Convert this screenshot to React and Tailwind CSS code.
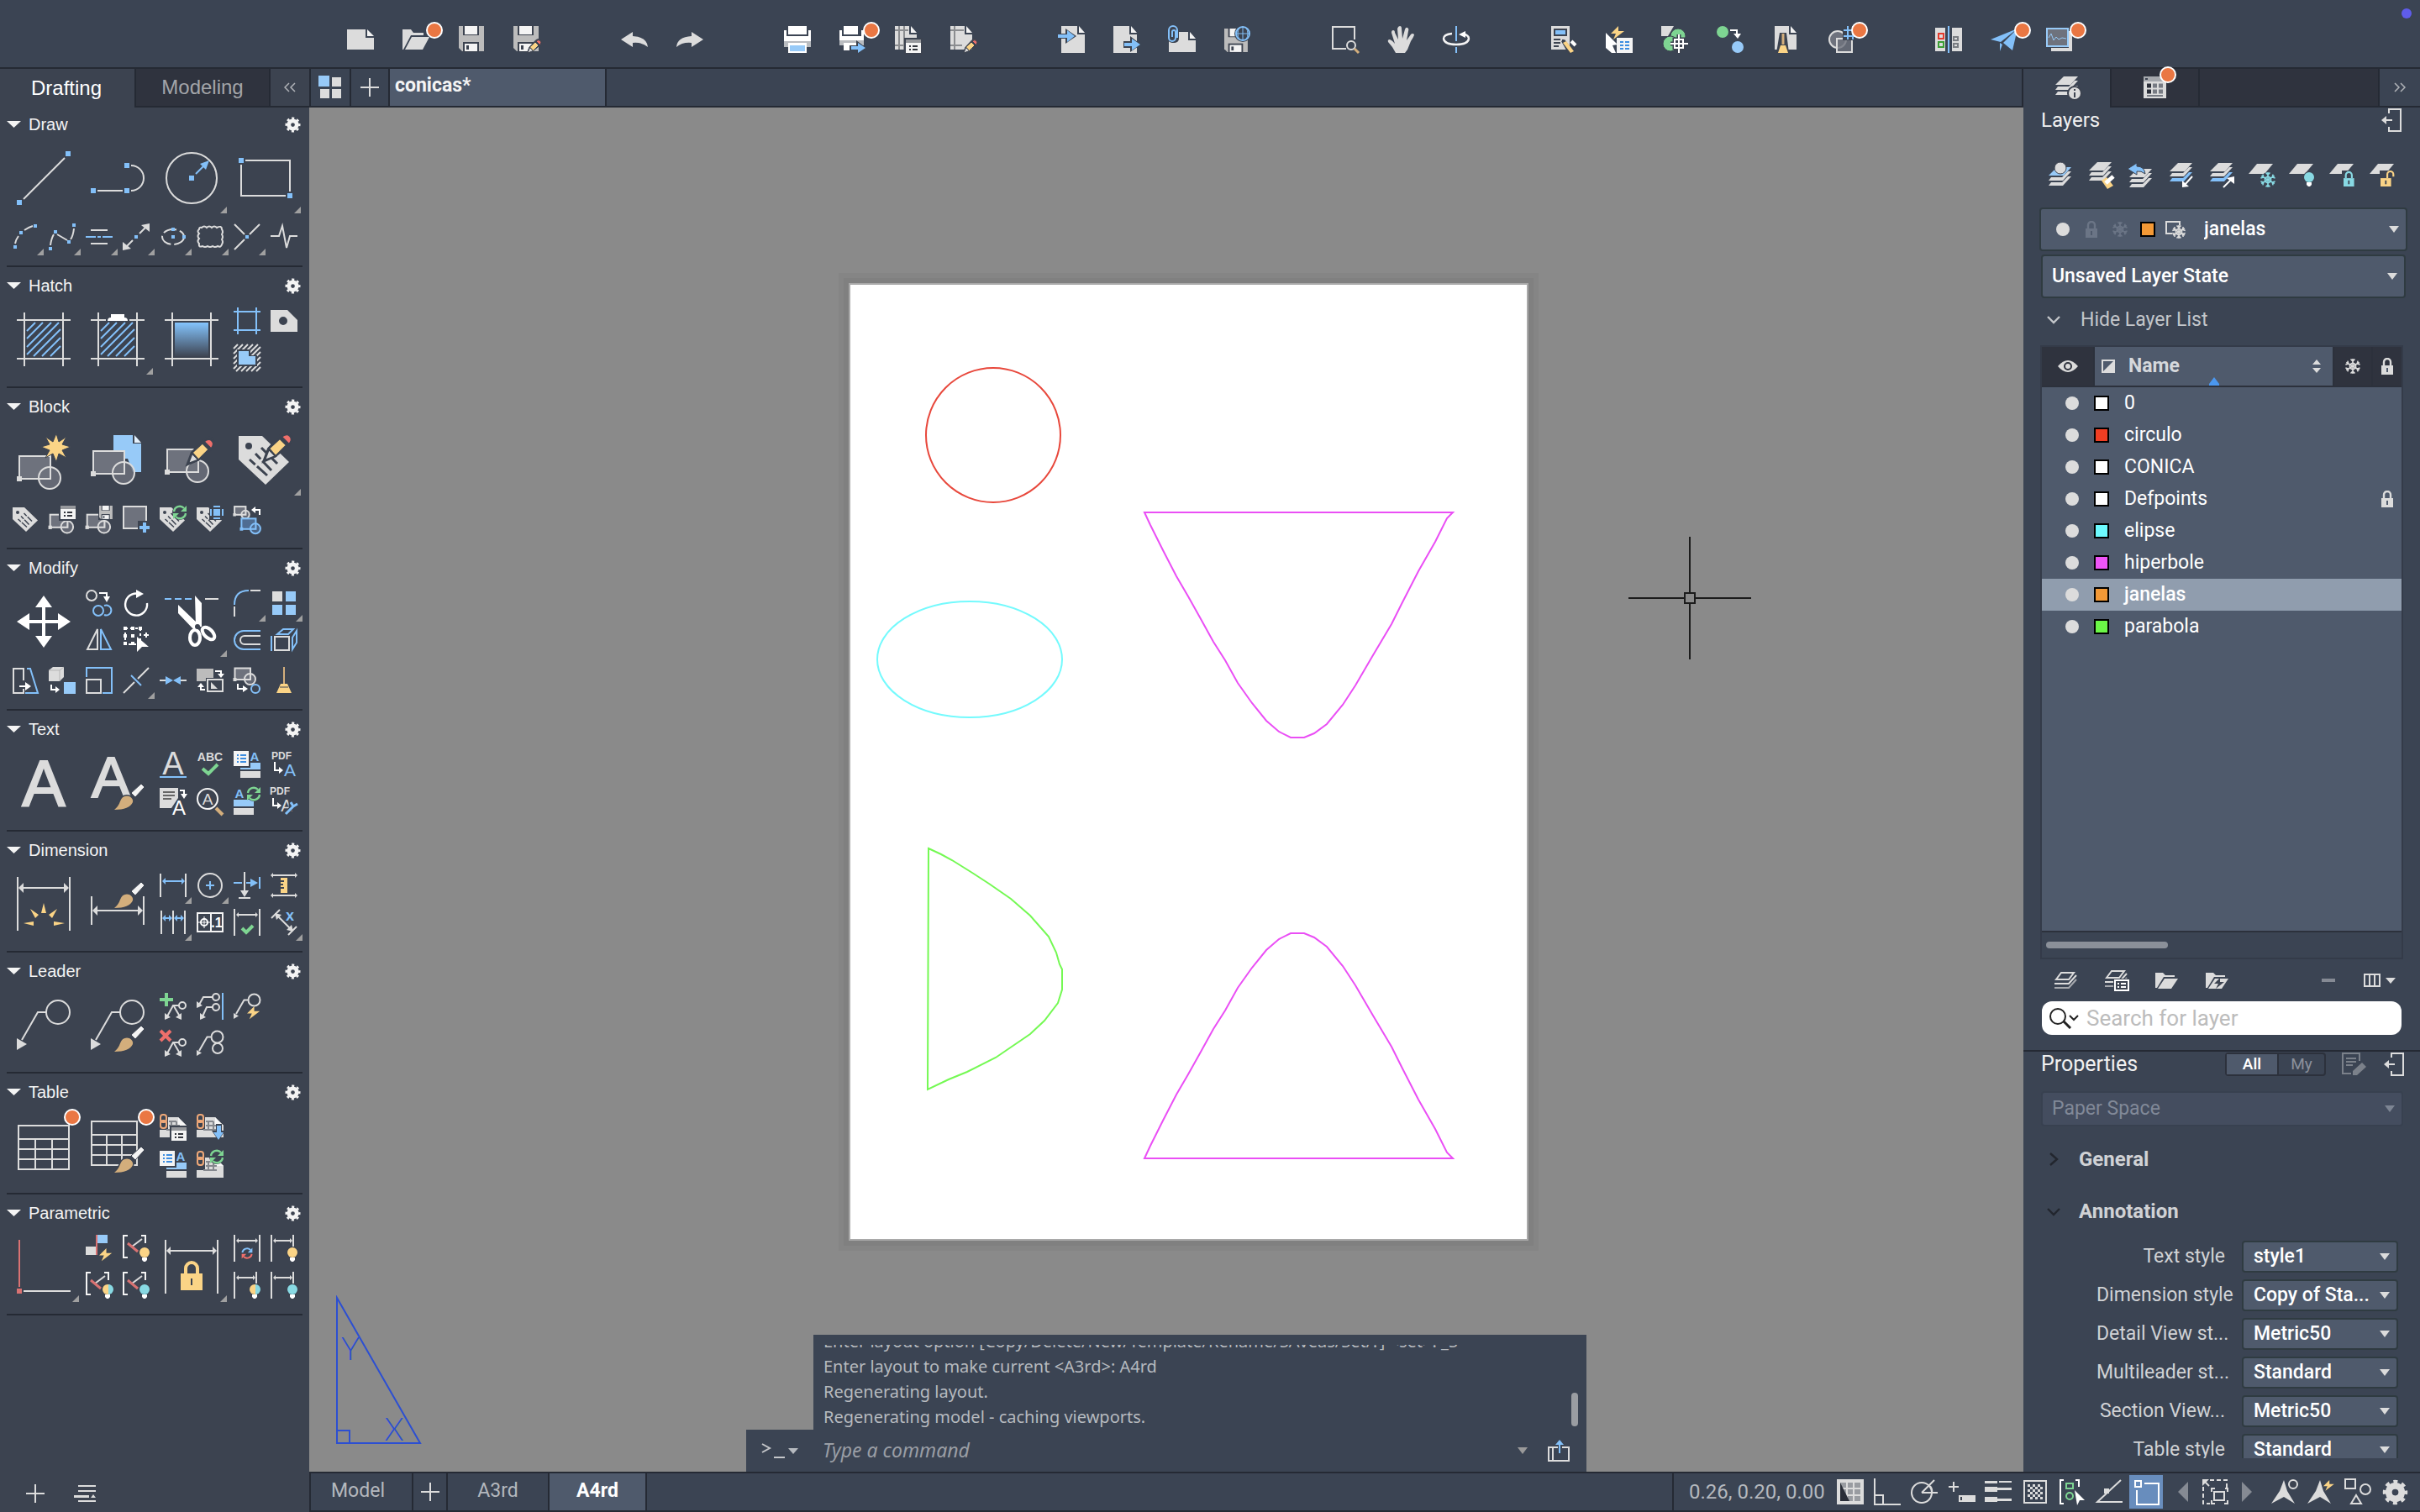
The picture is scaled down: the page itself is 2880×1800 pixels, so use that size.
import React from 'react'

const W = '#dcdcdc'
const B = '#83c0f9'
const LB = '#97caf8'
const Y = '#fbd486'
const R = '#ef6f6b'
const G = '#7ed592'
const TAN = '#d3ae7c'
const BG = '#3c4350'
const BLK = '#6e727d'
const TEAL = '#88d9e3'
const BLACK = '#2a2e38'

/* ================= ICON PARTS ================= */

const Dot = ({ x, y, s = 6, c = B }) => <rect x={x - s / 2} y={y - s / 2} width={s} height={s} fill={c} />

const L = ({ d, c = W, w = 2, ...rest }) => <path d={d} fill="none" stroke={c} strokeWidth={w} {...rest} />

const P = ({ d, c = W, ...rest }) => <path d={d} fill={c} {...rest} />

const T = ({ x, y, s, c = W, b, heavy, children }) => (
  <text x={x} y={y} fontSize={s} fill={c} stroke={heavy ? c : 'none'} strokeWidth={2} fontWeight={b ? 700 : 400} textAnchor="middle" fontFamily="Liberation Sans, Arial, sans-serif">
    {children}
  </text>
)

const Pencil = ({ x, y, k = 1 }) => (
  <g transform={`translate(${x} ${y}) scale(${k})`} stroke={BG} strokeWidth="2">
    <path d="M-2 2L4 -14L20 -31Q28 -36 32 -30Q35 -24 29 -18L12 -4Z" fill={BG} />
    <path d="M0 0L5 -13L13 -5Z" fill={W} />
    <path d="M5 -14L18 -26L26 -18L13 -5Z" fill={Y} />
    <path d="M20 -28Q26 -33 30 -29Q34 -25 29 -19Z" fill={R} />
  </g>
)

const Brush = ({ y = 0 }) => (
  <g transform={`translate(0 ${y})`}>
    <path d="M28 64Q33 60 35 54Q38 46 46 48Q51 51 50 55Q46 64 28 64Z" fill={TAN} stroke={BG} strokeWidth="3" />
    <path d="M28 64Q33 60 35 54Q38 46 46 48Q51 51 50 55Q46 64 28 64Z" fill={TAN} />
    <path d="M60 33L64 37L53 49L48 44Z" fill="#f4f4f4" stroke={BG} />
  </g>
)

const Block = ({ x = 0, y = 0, k = 1, c = W, f = BLK, w = 2 }) => (
  <g transform={`translate(${x} ${y}) scale(${k})`} stroke={c} strokeWidth={w / k}>
    <rect x="3" y="3" width="37" height="27" fill={f} />
    <circle cx="39" cy="29" r="13" fill={f} fillOpacity=".8" />
    <path d="M27 30H40V16" fill="none" />
    <rect x="1" y="28" width="4" height="4" fill={c} />
  </g>
)

const Tag = ({ k = 1, x = 0, y = 0 }) => (
  <g transform={`translate(${x} ${y}) scale(${k})`}>
    <path d="M0 0H28L60 31L32 58L0 28Z" fill={W} />
    <circle cx="12" cy="12" r="4" fill={BG} />
    <path d="M27 14L46 33M20 21L39 41M13 28L34 47" stroke={BG} strokeWidth="3" strokeDasharray="9 3 22" />
  </g>
)

const Disk = ({ x = 0, y = 0, k = 1 }) => (
  <g transform={`translate(${x} ${y}) scale(${k})`}>
    <path d="M0 0H30V30H4L0 26Z" fill="#bcbcbc" />
    <rect x="5" y="-1" width="19" height="12" fill={BG} />
    <rect x="7" y="0" width="15" height="10" fill="#f4f4f4" />
    <rect x="5" y="19" width="19" height="12" fill={BG} />
    <rect x="7" y="21" width="15" height="9" fill="#f4f4f4" />
    <rect x="9" y="23" width="3" height="5" fill={BG} />
  </g>
)

const Refresh = ({ x, y, k = 1, c = G, c2 = G }) => (
  <g transform={`translate(${x} ${y}) scale(${k})`} fill="none" strokeWidth="2.4">
    <path d="M-7 -1A7 7 0 0 1 5 -5" stroke={c} />
    <path d="M8 -8V-1H1Z" fill={c} />
    <path d="M7 1A7 7 0 0 1 -5 5" stroke={c2} />
    <path d="M-8 8V1H-1Z" fill={c2} />
  </g>
)

const Bulb = ({ x, y, c = Y, c2 }) => (
  <g>
    <circle cx={x} cy={y} r="7" fill={BG} />
    <circle cx={x} cy={y} r="6" fill={c} />
    {c2 && <path d={`M${x + 1} ${y - 6}A6 6 0 0 1 ${x + 1} ${y + 6}Z`} fill={c2} />}
    <path d={`M${x - 3} ${y + 6}H${x + 3}V${y + 9}L${x + 1} ${y + 11}H${x - 1}L${x - 3} ${y + 9}Z`} fill="#fff" />
  </g>
)

const Flake = ({ x, y, r = 9, c = W }) => (
  <g stroke={c} strokeWidth="1.6" fill="none">
    {[0, 60, 120, 180, 240, 300].map((a) => (
      <path key={a} d={`M0 0V${-r}M-2.5 ${-r + 0.5}L0 ${-r + 3}L2.5 ${-r + 0.5}M0 -4L3.5 -2`} transform={`translate(${x} ${y}) rotate(${a})`} />
    ))}
  </g>
)

const Lock = ({ x, y, k = 1, c = W, open, hole = BG }) => (
  <g transform={`translate(${x} ${y}) scale(${k})`}>
    <path d={open ? 'M9 9V4A4 4 0 0 1 17 4V7' : 'M3 9V5A4 4 0 0 1 11 5V9'} fill="none" stroke={c} strokeWidth="2.4" />
    <rect x="0" y="9" width="14" height="11" fill={c} />
    <rect x="6" y="12" width="2" height="5" fill={hole} />
  </g>
)

const Stack = ({ y = 0, top = W, mid = W, low = W }) => (
  <g transform={`translate(0 ${y})`}>
    <path d="M12 1H29L20 11H2Z" fill={top} />
    <path d="M5 13L2 17H19L29 6H25L18 13Z" fill={mid} />
    <path d="M5 19L2 23H19L29 12H25L18 19Z" fill={low} />
  </g>
)

const Outline = ({ y = 0 }) => (
  <g transform={`translate(0 ${y})`} fill="none" stroke={W} strokeWidth="2">
    <path d="M11 5H26L20 13H5Z" />
    <path d="M3 18H20L29 8" />
    <path d="M3 23H20L29 13" stroke="#a5a8ad" />
  </g>
)

// dimension line with arrow heads on both ends
const Dim = ({ x1, x2, y, c = W, s = 4 }) => (
  <g fill={c}>
    <path d={`M${x1 + 2} ${y}H${x2 - 2}`} stroke={c} strokeWidth="2" />
    <path d={`M${x1} ${y}l${s} ${-s}v${s * 2}z`} />
    <path d={`M${x2} ${y}l${-s} ${-s}v${s * 2}z`} />
  </g>
)

const Leader = ({ x = 0, y = 0, k = 1, w = 2 }) => (
  <g transform={`translate(${x} ${y}) scale(${k})`} fill="none" stroke={W} strokeWidth={w / k}>
    <circle cx="49" cy="17" r="14" />
    <path d="M35 17H25L6 50" />
    <path d="M0 48V62L12 55Z" fill={W} strokeWidth="0" />
  </g>
)

const Sheet = ({ x = 0, y = 0, w = 24, h = 24 }) => (
  <g transform={`translate(${x} ${y})`}>
    <path d={`M0 0H${w - 9}V10H${w}V${h}H0Z`} fill={W} />
    <path d={`M${w - 7} 0L${w} 8H${w - 7}Z`} fill="#f4f4f4" />
  </g>
)

const Bolt = ({ x, y, k = 1 }) => <path d="M9 0L0 9H6L3 16L16 6H9Z" fill={Y} transform={`translate(${x} ${y}) scale(${k})`} />

const Frame = () => <L d="M9 0V64M55 0V64M0 9H64M0 55H64" />

const Brackets = () => (
  <g>
    <L d="M6 1H1V27H6M22 1H27V10" c="#f4f4f4" />
    <L d="M11 14L23 5" c={W} />
    <L d="M6 10L18 20" c="#d97272" w={3} />
  </g>
)

const Chain = () => <g fill="none" stroke="#efa878" strokeWidth="2"><rect x="1" y="1" width="7" height="9" rx="3" /><rect x="1" y="8" width="7" height="9" rx="3" /></g>

const Ledger = () => (
  <g>
    <path d="M10 4H22L32 14V28H0V19H10Z" fill={W} />
    <path d="M22 4L32 14H22Z" fill="#f6f6f6" />
    <path d="M11 9H20M11 14H24M8 19H24M14 9V20M20 9V20" stroke="#85888e" strokeWidth="2" />
  </g>
)

const TagText = ({ y = 0 }) => (
  <g transform={`translate(0 ${y})`}>
    <T x={25} y={12} s={15} c={B} b>A</T>
    <rect x="8" y="14" width="24" height="8" fill={LB} />
    <rect x="8" y="24" width="24" height="8" fill={W} />
    <rect x="-1" y="-1" width="21" height="21" fill={BG} />
    <rect width="18" height="18" fill="#f4f4f4" />
    <path d="M4 5H6M8 5H15M4 9H6M8 9H15M4 13H6M8 13H15" stroke="#3d8de0" strokeWidth="2" />
  </g>
)

const Card = ({ x, y }) => (
  <g transform={`translate(${x} ${y})`}>
    <rect x="-2" y="-2" width="22" height="20" fill={BG} />
    <rect width="18" height="16" fill="#f4f4f4" />
    <rect width="18" height="4" fill="#96989c" />
    <path d="M4 8H6M8 8H14M4 12H6M8 12H14" stroke="#33363d" strokeWidth="2" />
  </g>
)

/* ================= ICONS ================= */

const icons = {
  /* draw */
  line: <><L d="M8 57L57 8" /><Dot x={3} y={61} /><Dot x={61} y={3} /></>,
  polyline: <><L d="M8 47H38M48 17A15 15 0 0 1 48 47" /><Dot x={3} y={47} /><Dot x={43} y={47} /><Dot x={43} y={17} /></>,
  circle: <><circle cx="32" cy="32" r="30" fill="none" stroke={W} strokeWidth="2" /><Dot x={32} y={32} /><L d="M37 27L46 18" c={B} /><P d="M42 15L53 11L49 22Z" c={B} /></>,
  rect: <><L d="M8 11H61V48M3 16V53H56" /><Dot x={3} y={11} /><Dot x={61} y={53} /></>,
  arc: <><L d="M4 24Q5 19 8 15M15 8Q19 5 25 3" /><Dot x={4} y={28} s={4} /><Dot x={11} y={11} s={4} /><Dot x={28} y={3} s={4} /></>,
  spline: <><L d="M2 26Q3 18 6 13M10 13L22 20M30 6Q29 15 26 19" /><Dot x={2} y={30} s={4} /><Dot x={8} y={10} s={4} /><Dot x={24} y={22} s={4} /><Dot x={30} y={2} s={4} /></>,
  mline: <><L d="M6 8H26M6 24H26" /><L d="M0 16H12M14 16H18M20 16H32" c={B} /></>,
  xline: <><L d="M5 27L12 20M20 12L27 5" /><P d="M0 32V22L10 30ZM32 0V10L22 2Z" /><Dot x={16} y={16} s={4} /></>,
  ellipse: <><ellipse cx="16" cy="16" rx="13" ry="9" fill="none" stroke={W} strokeWidth="2" strokeDasharray="16 4" /><Dot x={16} y={7} s={4} /><Dot x={16} y={16} s={4} /><Dot x={29} y={16} s={4} /></>,
  cloud: <L d="M3 7Q3 4 6 5Q9 2 12 5Q15 2 18 5Q21 2 24 5Q30 2 30 7Q32 10 30 13Q32 16 30 19Q32 22 30 25Q29 29 25 27Q22 29 19 27Q16 29 13 27Q10 29 7 27Q2 29 3 24Q0 21 3 18Q0 15 3 12Q0 9 3 7Z" />,
  cpoint: <><L d="M1 1L13 13M1 31L13 19M19 13L31 1" /><Dot x={16} y={16} s={4} /></>,
  breakline: <L d="M0 15H10L14 3L19 29L23 15H32" />,
  /* hatch */
  hatch: <><Frame /><L d="M12 22L22 12M12 31L31 12M12 41L41 12M12 50L50 12M20 52L52 20M30 52L52 30M40 52L52 40" c={B} /></>,
  hatchEdit: <><Frame /><rect x="18" y="5" width="28" height="7" fill={BG} /><L d="M12 22L22 12M12 31L31 12M12 41L41 12M12 50L50 12M20 52L52 20M30 52L52 30M40 52L52 40" c={B} /><P d="M24 2H40V6Q44 6 44 10H20Q20 6 24 6Z" c="#fff" /></>,
  gradient: <><defs><linearGradient id="fade" x1="0" y1="0" x2="0" y2="1"><stop offset="0" stopColor="#84c4fd" /><stop offset="1" stopColor="#3f4654" /></linearGradient></defs><Frame /><rect x="12" y="12" width="40" height="40" fill="url(#fade)" /></>,
  boundary: <L d="M5 0V32M27 0V32M0 5H32M0 27H32" c={B} />,
  region: <P d="M0 3H20L32 15V29H0ZM15 11A5 5 0 1 0 15 21A5 5 0 1 0 15 11Z" fillRule="evenodd" />,
  wipeout: <><L d="M0 5L5 0M0 11L11 0M0 17L17 0M0 23L23 0M0 29L29 0M3 32L32 3M9 32L32 9M15 32L32 15M21 32L32 21M27 32L32 27" /><P d="M4 6H20V13H28V26H4Z" c={BG} /><P d="M6 8H18V14H26V24H6Z" c={LB} /></>,
  /* block */
  blockNew: <><Block y={24} /><P d="M47 0L50 10L59 4L54 13L64 16L54 20L59 29L50 24L47 34L43 24L34 29L39 20L29 16L39 13L34 4L43 10Z" c={Y} stroke={BG} strokeWidth="1" /></>,
  blockInsert: <><P d="M27 2H50V12H60V46H50L44 30H27Z" c={LB} /><P d="M52 2L60 11H52Z" c="#e4f1fd" /><Block y={18} /></>,
  blockEdit: <><Block y={16} /><Pencil x={28} y={36} k={0.94} /></>,
  attrEdit: <><Tag y={3} /><Pencil x={31} y={32} /></>,
  tag: <Tag k={0.5} x={1} y={2} />,
  blockAttr: <><Block k={0.56} y={9} /><Card x={14} y={0} /></>,
  blockSave: <><Block k={0.56} y={9} /><rect x="15" y="-1" width="18" height="18" fill={BG} /><Disk k={0.53} x={16} y={0} /></>,
  blockBase: <><rect x="1" y="1" width="27" height="26" fill={BLK} stroke={W} strokeWidth="2" /><path d="M18 18H32V32H18Z" fill={BG} /><L d="M26 20V32M20 26H32" c={B} w={4} /></>,
  tagSync: <><Tag k={0.5} x={0} y={2} /><circle cx="24" cy="8" r="9" fill={BG} /><Refresh x={24} y={8} /></>,
  tagSelect: <><Tag k={0.5} x={0} y={2} /><rect x="15" y="-1" width="18" height="18" fill={BG} /><rect x="20" y="4" width="8" height="8" fill={B} /><L d="M20 1H28M20 15H28M17 4V12M31 4V12" c={B} /></>,
  blockSwap: <><Block k={0.36} x={0} y={0} /><Block k={0.46} x={8} y={14} c={B} f="#4f6d92" /><L d="M24 5H31V11" c="#fff" /><P d="M21 5L26 1V9Z" c="#fff" /></>,
  /* modify */
  move: <><L d="M32 12V52M12 32H52" c="#fff" w={4} /><P d="M32 1L42 15H22ZM32 63L42 49H22ZM0 32L15 22V42ZM64 32L49 22V42Z" c="#fff" /></>,
  copy: <><circle cx="7" cy="7" r="6" fill="none" stroke={W} strokeWidth="2" /><circle cx="15" cy="25" r="6" fill="none" stroke={B} strokeWidth="2" /><L d="M22 19A6 6 0 1 1 22 30" c={B} /><L d="M16 4H25V10" c="#fff" /><P d="M21 8H29L25 15Z" c="#fff" /></>,
  rotate: <><L d="M22 6A13 13 0 1 0 29 16" c="#fff" w={2.4} /><P d="M16 0L25 5L16 10Z" c="#fff" /></>,
  trim: <><L d="M0 5H8M12 5H20M24 5H32" c={B} /><L d="M48 5H64" /><P d="M36 1L44 10V38H37ZM16 12L41 36L36 43L16 22Z" c="#fff" /><ellipse cx="36" cy="51" rx="6" ry="9" fill="none" stroke="#fff" strokeWidth="4" /><ellipse cx="52" cy="46" rx="5" ry="9" fill="none" stroke="#fff" strokeWidth="4" transform="rotate(-45 52 46)" /><circle cx="39" cy="38" r="3" fill={BG} /></>,
  fillet: <><L d="M1 18Q1 1 18 1" c={B} /><L d="M20 1H32M1 20V32" /></>,
  array: <><rect x="2" y="2" width="12" height="12" fill={W} /><rect x="18" y="2" width="12" height="12" fill={LB} /><rect x="2" y="18" width="12" height="12" fill={LB} /><rect x="18" y="18" width="12" height="12" fill={LB} /></>,
  mirror: <><L d="M14 3V27H2Z" /><L d="M18 3V27H30Z" c={B} /></>,
  stretch: <><L d="M3 2H21V21H3Z" c="#fff" strokeDasharray="3 3" /><Dot x={3} y={2} s={4} c="#fff" /><Dot x={12} y={2} s={4} c="#fff" /><Dot x={21} y={2} s={4} c="#fff" /><Dot x={3} y={11} s={4} c="#fff" /><Dot x={12} y={11} s={4} c="#fff" /><Dot x={3} y={20} s={4} c="#fff" /><Dot x={12} y={20} s={4} c="#fff" /><P d="M17 12L31 24H23L17 30Z" c="#fff" /><L d="M28 7V13M25 10H31" c="#fff" /></>,
  offset: <><L d="M32 5H12A10 10 0 0 0 12 27H32" c={B} /><L d="M32 11H13A5 5 0 0 0 13 21H32" /></>,
  extrude: <><L d="M5 12H22V28H5Z" /><L d="M1 11V29M8 9L15 3H27L21 9ZM26 13L31 5V19L26 27Z" c={B} /></>,
  taper: <><L d="M14 16V2H2V31H14V26" /><L d="M18 2H22L31 31H16" c={B} /><L d="M9 23H18" c="#fff" /><P d="M16 18L23 23L16 28Z" c="#fff" /></>,
  extract: <><P d="M0 4L5 0H18V12L13 17H0Z" /><L d="M0 4H13V17M13 4L18 0" c="#b5b5b5" w={1} /><rect x="18" y="18" width="14" height="14" fill={LB} /><L d="M3 21V27H9" c="#fff" /><P d="M8 23L13 27L8 31Z" c="#fff" /></>,
  scale: <><L d="M1 15H18V31H1Z" /><L d="M1 12V1H31V31H20" c={B} /></>,
  breakAt: <><L d="M1 31L14 18M18 14L31 1" /><L d="M10 10L22 22" c={B} /></>,
  join: <><L d="M0 16H8M24 16H32" /><P d="M7 11L16 16L7 21ZM25 11L16 16L25 21Z" c={B} /></>,
  order: <><rect x="0" y="2" width="20" height="15" fill="#bcbcbc" /><rect x="11" y="13" width="22" height="18" fill={BG} /><rect x="13" y="15" width="18" height="14" fill="none" stroke={W} strokeWidth="2" /><P d="M17 18V26H25Z" /><L d="M22 5H29V9M10 27H5V23" c="#fff" /><P d="M25 8H33L29 13ZM1 24H9L5 19Z" c="#fff" /></>,
  group: <><Block k={0.5} x={0} y={0} /><circle cx="26" cy="26" r="5" fill="none" stroke={B} strokeWidth="2" /><L d="M5 20V26H12" c="#fff" /><P d="M11 22L17 26L11 30Z" c="#fff" /></>,
  purge: <><L d="M16 0V20" c={TAN} /><P d="M12 20H20L25 31H7Z" c={Y} /><L d="M11 24H21" c={BG} w={1} /></>,
  /* text */
  mtext: <T x={32} y={60} s={77} heavy>A</T>,
  textStyle: <><T x={24} y={49} s={69} heavy>A</T><Brush /></>,
  stext: <><T x={16} y={28} s={38}>A</T><L d="M0 31H32" c={B} /></>,
  spell: <><T x={16} y={12} s={14} b>ABC</T><L d="M7 21L14 27L25 16" c={G} w={4} /></>,
  field: <TagText />,
  pdfText: <><T x={13} y={10} s={12} b>PDF</T><L d="M5 13V23H10" c="#fff" /><P d="M10 19L15 23L10 27Z" c="#fff" /><T x={23} y={30} s={21} c={B}>A</T></>,
  textConv: <><P d="M0 0H22V12L14 24H0Z" /><L d="M4 5H18M4 9H18M4 13H14" c="#666" /><L d="M24 3H29V8" c="#fff" /><P d="M25 7H33L29 13Z" c="#fff" /><T x={23} y={32} s={24} c="#fff">A</T></>,
  find: <><circle cx="13" cy="13" r="12" fill="none" stroke="#f4f4f4" strokeWidth="2" /><T x={13} y={20} s={19}>A</T><L d="M23 24L31 32" c={TAN} w={4} /></>,
  fieldSync: <><T x={7} y={12} s={15} c={B} b>A</T><rect x="0" y="14" width="24" height="8" fill={LB} /><rect x="0" y="24" width="24" height="8" fill={W} /><circle cx="24" cy="7" r="9" fill={BG} /><Refresh x={24} y={7} /></>,
  pdfTool: <><T x={11} y={8} s={12} b>PDF</T><L d="M3 12V21H8" c="#fff" /><P d="M8 17L13 21L8 25Z" c="#fff" /><T x={19} y={28} s={20}>A</T><L d="M18 31L27 22M24 16V23H31" c={BG} w={5} /><L d="M18 31L27 22M24 17L27 22L32 19" c={B} w={3} /></>,
  /* dimension */
  dim: <><L d="M1 0V64M63 0V64" /><Dim x1={2} x2={62} y={13} s={6} /><P d="M32 31L35 43H29ZM16 38L26 45L22 49ZM48 38L38 45L42 49ZM8 55L20 53V58ZM57 55L44 53V58Z" c={Y} /></>,
  dimStyle: <><L d="M1 23V57M63 23V57" /><Dim x1={2} x2={62} y={40} s={6} /><Brush y={-27} /></>,
  dimLinear: <><L d="M1 2V30M31 2V30" /><Dim x1={3} x2={30} y={11} c={B} /></>,
  centerMark: <><circle cx="16" cy="16" r="14" fill="none" stroke={W} strokeWidth="2" /><L d="M16 11V21M11 16H21" c={B} /></>,
  dimSpace: <><L d="M0 13H10M15 13H24" c={B} /><P d="M20 8L29 13L20 18Z" c={B} /><L d="M31 6V20" c={B} /><L d="M13 0V24M6 31H20" /><P d="M8 22H18L13 30Z" /></>,
  measure: <><Dim x1={0} x2={32} y={4} s={3} /><Dim x1={0} x2={32} y={28} s={3} /><rect x="12" y="7" width="8" height="18" fill={Y} /><L d="M12 11H16M12 15H15M12 19H16" c={BG} /></>,
  dimCont: <><L d="M2 2V30M16 2V30M30 2V30" /><Dim x1={3} x2={15} y={11} c={B} /><Dim x1={17} x2={29} y={11} c={B} /></>,
  tolerance: <><L d="M1 5H31V27H1ZM17 5V27" c="#f4f4f4" /><circle cx="9" cy="16" r="4" fill="none" stroke="#fff" strokeWidth="2" /><L d="M9 9V23M2 16H16" c="#fff" w={1} /><T x={24} y={22} s={16} c="#fff" b>.1</T></>,
  inspect: <><L d="M1 0V32M31 0V32" /><Dim x1={3} x2={29} y={7} s={3} /><L d="M10 23L15 28L23 20" c={G} w={4} /></>,
  oblique: <><L d="M1 11L11 1M21 31L31 21M8 8L24 24" /><P d="M5 5L13 7L7 13ZM27 27L19 25L25 19Z" /><T x={23} y={14} s={18} c={B} b>x</T></>,
  /* leader */
  leader: <Leader />,
  leaderStyle: <><Leader /><Brush /></>,
  leaderAdd: <><L d="M8 0V16M0 8H16" c={G} w={4} /><circle cx="27" cy="15" r="4" fill="none" stroke={W} strokeWidth="2" /><L d="M23 15H16L9 28M17 16L24 28" /><P d="M6 32V24L13 29ZM26 32V24L19 29Z" /></>,
  leaderAlign: <><circle cx="23" cy="5" r="4" fill="none" stroke={W} strokeWidth="2" /><circle cx="23" cy="17" r="4" fill="none" stroke={W} strokeWidth="2" /><L d="M19 5H8L3 14M19 17H12L7 28" /><P d="M0 18V10L7 15ZM4 32V24L11 29Z" /><L d="M31 0V32" c={B} /></>,
  leaderBolt: <><Leader k={0.5} /><P d="M16 17H32V32H16Z" c={BG} /><Bolt x={16} y={16} k={0.95} /></>,
  leaderDel: <><L d="M1 1L13 13M13 1L1 13" c={R} w={4} /><circle cx="27" cy="15" r="4" fill="none" stroke={W} strokeWidth="2" /><L d="M23 15H16L9 28M17 16L24 28" /><P d="M6 32V24L13 29ZM26 32V24L19 29Z" /></>,
  leaderCollect: <><Leader k={0.5} /><circle cx="25" cy="22" r="6" fill={BG} stroke={W} strokeWidth="2" /></>,
  /* table */
  table: <L d="M2 8H62V60H2ZM2 24H62M2 36H62M2 48H62M22 24V60M42 24V60" />,
  tableStyle: <><L d="M1 3H55V55H1ZM1 19H55M1 31H55M1 43H55M19 19V55M37 19V55" /><Brush /></>,
  link: <><Ledger /><Chain /><Card x={14} y={16} /></>,
  linkDown: <><Ledger /><Chain /><P d="M23 12H30V20H34L26 32L18 20H23Z" c={BG} /><P d="M24 14H29V22H32L26 31L20 22H24Z" c={B} /></>,
  linkField: <TagText />,
  linkSync: <><g transform="translate(0 4)"><Ledger /></g><Chain /><circle cx="24" cy="7" r="9" fill={BG} /><Refresh x={24} y={7} /></>,
  /* parametric */
  geo: <><L d="M3 0V56" c="#d97272" /><Dot x={3} y={61} c="#d97272" /><L d="M8 61H64" /></>,
  autoCon: <><rect x="14" y="0" width="12" height="10" fill={LB} /><rect x="0" y="14" width="12" height="10" fill={W} /><L d="M13 0V24" c="#d97272" /><Bolt x={16} y={16} k={0.95} /></>,
  conShow: <><Brackets /><Bulb x={26} y={21} /></>,
  conMix: <><Brackets /><Bulb x={26} y={21} c={Y} c2={TEAL} /></>,
  conHide: <><Brackets /><Bulb x={26} y={21} c={TEAL} /></>,
  dimLock: <><L d="M1 0V64M63 0V64" /><Dim x1={2} x2={62} y={13} s={5} /><path d="M25 42V34A7 7 0 0 1 39 34V42" fill="none" stroke={Y} strokeWidth="4" /><rect x="19" y="40" width="26" height="20" fill={Y} /><rect x="31" y="46" width="2" height="8" fill={BG} /></>,
  dimConv: <><L d="M1 0V32M31 0V32" /><Dim x1={3} x2={29} y={7} s={3} /><Refresh x={16} y={22} k={0.8} c={B} c2={R} /></>,
  dimShow: <><L d="M1 0V32M27 0V14" /><Dim x1={3} x2={26} y={7} s={3} /><Bulb x={26} y={21} /></>,
  dimMix: <><L d="M1 0V32M27 0V14" /><Dim x1={3} x2={26} y={7} s={3} /><Bulb x={25} y={21} c={Y} c2={TEAL} /></>,
  dimHide: <><L d="M1 0V32M27 0V14" /><Dim x1={3} x2={26} y={7} s={3} /><Bulb x={26} y={21} c={TEAL} /></>,
  /* top bar */
  fileNew: <g><path d="M0 4H22V14H32V28H0Z" fill={W} /><path d="M24 4L32 12H24Z" fill="#f4f4f4" /></g>,
  open: <><P d="M0 28V4H10L13 8H25V11H10L1 28Z" /><P d="M11 13H32L24 28H3Z" /></>,
  save: <Disk x={1} />,
  saveAs: <><Disk x={0} /><Pencil x={17} y={32} k={0.5} /></>,
  undo: <P d="M0 16L14 7V12Q31 13 32 25Q25 19 14 20V25Z" />,
  redo: <P d="M32 16L18 7V12Q1 13 0 25Q7 19 18 20V25Z" />,
  print: <><rect x="5" y="0" width="22" height="10" fill="#fff" /><P d="M0 5H3V12H29V5H32V18H0Z" c="#fff" /><rect y="18" width="32" height="7" fill="#b9bcc0" /><rect x="5" y="20" width="22" height="12" fill="#fff" /><rect x="7" y="23" width="18" height="7" fill={LB} /></>,
  publish: <><rect x="5" y="0" width="17" height="10" fill="#fff" /><P d="M0 5H3V12H26V5H29V17H0Z" c="#fff" /><rect y="17" width="29" height="6" fill="#b9bcc0" /><rect x="5" y="20" width="18" height="9" fill="#fff" /><P d="M12 23H20V17L32 26L20 34V29H12Z" c={BG} /><P d="M14 24H22V20L31 26L22 32V28H14Z" c={B} /></>,
  pageSetup: <><Sheet w={26} h={28} /><L d="M0 5H16M0 23H14M5 0V28M11 0V28" c="#8b8d90" /><Card x={13} y={16} /></>,
  plotStyle: <><Sheet w={26} h={28} /><L d="M0 5H16M0 23H14M5 0V28" c="#8b8d90" /><Pencil x={16} y={32} k={0.5} /></>,
  importFile: <><Sheet x={4} w={28} h={32} /><P d="M0 9H9V3L22 12L9 21V15H0Z" c={BG} /><P d="M0 10H11V5L20 12L11 19V14H0Z" c={B} /></>,
  exportFile: <><Sheet x={0} w={28} h={32} /><P d="M12 18H20V12L33 22L20 31V26H12Z" c={BG} /><P d="M13 20H22V15L32 22L22 29V24H13Z" c={B} /></>,
  attach: <><Sheet x={0} y={7} w={32} h={24} /><rect x="-1" y="-1" width="13" height="21" rx="5" fill={BG} /><L d="M10 14V5A5 5 0 0 0 0 5V14A4 4 0 0 0 8 14V7A2 2 0 0 0 4 7V13" c={B} /></>,
  saveWeb: <><g transform="translate(0 3)"><Disk k={0.93} /></g><circle cx="22" cy="9" r="10" fill={BG} /><circle cx="22" cy="9" r="8" fill="none" stroke={B} strokeWidth="2" /><L d="M14 9H30M22 1V17M18 2Q14 9 18 16M26 2Q30 9 26 16" c={B} w={1} /></>,
  zoomWin: <><L d="M17 27H1V1H27V16" /><circle cx="23" cy="23" r="5" fill="none" stroke={W} strokeWidth="2" /><L d="M27 27L32 32" c={TAN} w={3} /></>,
  pan: <P d="M10 32Q6 24 1 19Q0 16 3 16Q6 17 9 21L5 8Q5 5 7 5Q9 5 9 8L13 16L12 3Q13 0 15 0Q17 0 17 3L18 15L21 4Q22 1 24 2Q26 3 25 6L23 17L28 10Q30 8 32 10Q32 12 28 18L24 28L21 32Z" />,
  orbit: <><L d="M11 9Q1 10 1 15Q2 22 16 22Q30 22 31 15Q31 11 24 9" c="#f4f4f4" w={2.4} /><L d="M16 0V18M16 25V32" c={B} /><P d="M27 6L19 10L27 14Z" c="#fff" /></>,
  props: <><rect x="1" width="22" height="28" fill={W} /><rect x="4" y="3" width="16" height="9" fill={BG} /><rect x="6" y="5" width="12" height="5" fill={B} /><L d="M4 16H12M4 20H12M4 24H10M15 16V20" c={BG} /><P d="M13 18L17 16L28 30L22 34Z" c={BG} /><P d="M15 20L19 18L28 30L24 32Z" c={Y} /><L d="M25 18L30 23" c="#fff" w={4} /></>,
  quick: <><P d="M0 8L14 22L8 23L12 32H7L0 26Z" c="#fff" /><Bolt x={6} y={0} /><rect x="13" y="14" width="19" height="18" fill="#f4f4f4" /><L d="M17 19H21M23 19H28M17 23H21M23 23H28M17 27H21M23 27H28" c="#3d8de0" /></>,
  geoRef: <><P d="M0 0H15L8 12H0Z" /><circle cx="20" cy="12" r="9" fill={G} stroke={BG} /><circle cx="11" cy="21" r="9" fill={G} stroke={BG} /><L d="M21 10V32M11 21H32M16 16H26V26H16Z" c={BG} w={5} /><L d="M21 10V32M11 21H32M16 16H26V26H16Z" c="#fff" /></>,
  blockConv: <><circle cx="7" cy="7" r="7" fill={G} /><circle cx="25" cy="25" r="7" fill={LB} /><L d="M16 5H24V10" c="#fff" /><P d="M20 9H29L25 15Z" c="#fff" /></>,
  cleanup: <><g transform="translate(3)"><Sheet w={26} h={28} /></g><P d="M9 8H17L20 32H5Z" c={BG} /><L d="M13 9V22" c={TAN} w={3} /><P d="M10 23H16L19 32H7Z" c={Y} /></>,
  count: <><circle cx="12" cy="16" r="10" fill={BLK} stroke={W} strokeWidth="2" /><rect x="11" y="15" width="18" height="16" fill={BLK} fillOpacity=".8" stroke={W} strokeWidth="2" /><rect x="18" y="0" width="16" height="17" fill={BG} /><L d="M24 0V16M30 0V16M19 5H33M19 12H33" c={B} /></>,
  compare: <><rect x="0" y="2" width="12" height="28" fill={W} /><rect x="20" y="2" width="12" height="28" fill={W} /><L d="M4 9H10V15H4Z" c="#e23b2e" /><L d="M4 19H10V25H4Z" c="#3b9e35" /><L d="M22 13H27V17H22ZM22 21H27V25H22Z" c="#7a7d82" /><L d="M16 0V32" c={B} /></>,
  share: <><P d="M0 16L32 3L12 19ZM32 3L15 20L26 29Z" c={B} /><P d="M11 20L14 22L11 30Z" c={B} /></>,
  activity: <><rect x="6" y="6" width="25" height="24" fill={W} /><rect x="-1" y="1" width="28" height="25" fill={BG} /><rect x="1" y="3" width="25" height="21" fill={BLK} stroke={LB} strokeWidth="2" /><L d="M3 14L6 9L9 17L12 13L15 16L19 14L24 15" c={LB} w={1} /></>,
  /* layer tools */
  layMake: <><Stack y={6} top={LB} /><circle cx="16" cy="8" r="7" fill={W} stroke={BG} /></>,
  layMatch: <><Stack /><P d="M17 23L23 19L31 29L24 33Z" c={Y} /><L d="M22 26L31 18" c="#fff" w={5} /></>,
  layPrev: <><Stack y={8} /><P d="M0 9L11 2V6Q20 6 21 15Q16 11 11 12V16Z" c={B} stroke={BG} strokeWidth="1" /></>,
  layCur: <><Stack y={1} low={B} /><L d="M29 18L20 28" c="#fff" /><P d="M17 31V23L25 30Z" c="#fff" /></>,
  layCopy: <><Stack y={1} low={B} /><L d="M18 31L28 21" c="#fff" /><P d="M31 18V27L22 20Z" c="#fff" /></>,
  layFreeze: <><P d="M10 3H29L19 15H0Z" /><circle cx="23" cy="22" r="9" fill={BG} /><Flake x={23} y={22} c={TEAL} /></>,
  layOff: <><P d="M10 3H29L19 15H0Z" /><Bulb x={24} y={19} c={TEAL} /></>,
  layLock: <><P d="M10 3H29L19 15H0Z" /><rect x="15" y="11" width="17" height="19" fill={BG} /><Lock x={17} y={12} k={0.9} c={TEAL} /></>,
  layUnlock: <><P d="M10 3H29L19 15H0Z" /><rect x="12" y="11" width="17" height="19" fill={BG} /><Lock x={13} y={12} k={0.9} c={Y} open /></>,
  layInfo: <><Stack y={1} /><circle cx="25" cy="22" r="9" fill={BG} /><circle cx="25" cy="22" r="7" fill={W} /><L d="M25 17V19M25 21V27" c={BG} /></>,
  sheetSet: <><rect x="2" y="3" width="27" height="26" fill={W} /><rect x="2" y="3" width="27" height="6" fill="#a5a8ad" /><rect x="4" y="5" width="3" height="2" fill={BG} /><L d="M6 14H11M6 21H11" c={BLACK} w={5} /><L d="M13 14H18M20 14H25M13 21H18M20 21H25" c="#777b83" w={5} /><L d="M6 26H25" c="#777b83" /></>,
  newLayer: <Outline y={2} />,
  newState: <><Outline /><rect x="13" y="14" width="19" height="15" fill={BG} /><L d="M15 16H31V28H15ZM18 20H20M22 20H28M18 24H20M22 24H28" c="#fff" /></>,
  folder: <><P d="M3 25V7H12L15 10H26V12H13L5 25Z" /><P d="M14 14H30L22 26H6Z" /></>,
  folderBolt: <><P d="M3 25V7H12L15 10H26V12H13L5 25Z" /><P d="M14 14H30L22 26H6Z" /><P d="M20 13L13 20H18L15 26L25 18H20Z" c={BG} /></>,
  columns: <L d="M3 9H21V23H3ZM9 9V23M15 9V23" />,
  quickSel: <><L d="M12 27H2V3H22V12M6 9H18M6 13H18M6 17H14" /><P d="M14 24L25 14L30 19L19 29H14Z" /></>,
  dock: <><L d="M12 8V3H26V29H12V24" /><L d="M6 16H16" /><P d="M3 16L9 11V21Z" /></>,
  /* status bar */
  grid: <><rect width="32" height="30" y="1" fill={W} /><rect x="4" y="5" width="24" height="22" fill="#999ca1" /><L d="M12 5V27M20 5V27M4 12H28M4 20H28" /><P d="M4 5L15 27H4Z" c={BLACK} /></>,
  ortho: <L d="M1 0V31H32M1 20H11V31" />,
  polar: <><circle cx="13" cy="17" r="12" fill="none" stroke={W} strokeWidth="2" /><L d="M13 17L28 2M13 17H32M23 9Q26 13 25 17" /></>,
  dyn: <><L d="M7 4V16M1 10H13" /><rect x="13" y="20" width="20" height="8" fill={W} /><L d="M16 22V26" c={BG} /></>,
  lwt: <><L d="M0 4H15M17 4H32" /><P d="M0 10H15V11H32V14H15V16H0ZM0 22H15V24H32V27H15V28H0ZM0 6H15V3H0Z" /></>,
  transp: <><L d="M3 3H29V29H3Z" /><g fill={W}>{[0, 1, 2, 3, 4, 5].map((r) => [0, 1, 2].map((c) => <rect key={r + '-' + c} x={7 + c * 6 + (r % 2) * 3} y={7 + r * 3} width="3" height="3" />))}</g></>,
  cycle: <><L d="M6 2H2V30H6M20 2H24V10" c="#fff" /><L d="M9 6H17V12H9ZM13 17A4 4 0 1 1 13 25A4 4 0 1 1 13 17Z" c={G} /><P d="M19 14L31 26H25L22 32Z" c="#fff" /></>,
  osnap: <><L d="M30 2L2 28H32" /><Dot x={13} y={15} c={W} /></>,
  space: <><L d="M3 3H10V10H3Z" c="#fff" /><L d="M14 6H31V31H5V14" c="#fff" /></>,
  zoomVp: <><L d="M10 2H30V12M2 10V30H10" strokeDasharray="5 3" /><L d="M12 16V12H16M28 12H31V16M12 26V30H16M27 30H31V26M15 16H27V26H15Z" /><P d="M1 1H9L1 9Z" /><L d="M4 4L9 9" /></>,
  annoVis: <><P d="M16 2L20 15L29 30L16 22L1 30L11 15Z" /><circle cx="27" cy="7" r="5" fill={BG} stroke={W} strokeWidth="2" /></>,
  annoAuto: <><P d="M15 2L19 15L28 30L15 22L0 30L10 15Z" /><Bolt x={19} y={2} k={0.8} /></>,
  workspace: <><L d="M1 1H13V12H1ZM14 20L20 30H8Z" /><circle cx="25" cy="13" r="6" fill="none" stroke={W} strokeWidth="2" /></>,
}

const Icon = ({ name, big }) => (
  <svg viewBox={big ? '0 0 64 64' : '0 0 32 32'} className={big ? 'size-16 overflow-visible' : 'size-8 overflow-visible'} aria-hidden="true">
    {icons[name]}
  </svg>
)

const Gear = ({ className, fill = '#f4f4f4' }) => (
  <svg viewBox="0 0 20 20" className={className} fill="none" stroke={fill} aria-hidden="true">
    <circle cx="10" cy="10" r="5" strokeWidth="5" />
    <circle cx="10" cy="10" r="8" strokeWidth="3" strokeDasharray="3.14 3.14" strokeDashoffset="1.57" />
  </svg>
)

const Caret = ({ className = 'h-2 w-3', fill = W }) => (
  <svg viewBox="0 0 12 8" preserveAspectRatio="none" className={className} aria-hidden="true">
    <path d="M0 0H12L6 8Z" fill={fill} />
  </svg>
)

const Plus = () => (
  <svg viewBox="0 0 22 22" className="size-[22px]" stroke={W} strokeWidth="2" aria-hidden="true">
    <path d="M11 0V22M0 11H22" />
  </svg>
)

const Badge = ({ className }) => (
  <span className={`absolute size-5 rounded-full border-2 border-white bg-[#ea7743] ${className}`} />
)

/* ================= LEFT TOOL SETS ================= */

const big = (icon, extra) => ({ icon, big: true, ...extra })
const sm = (icon, extra) => ({ icon, ...extra })
const more = { more: true }

const toolSets = [
  {
    title: 'Draw',
    grid: [big('line'), big('polyline'), big('circle', more), big('rect', more)],
    row: [sm('arc', more), sm('spline', more), sm('mline', more), sm('xline', more), sm('ellipse', more), sm('cloud', more), sm('cpoint', more), sm('breakline')],
  },
  { title: 'Hatch', grid: [big('hatch'), big('hatchEdit', more), big('gradient'), sm('boundary'), sm('region'), sm('wipeout')] },
  {
    title: 'Block',
    grid: [big('blockNew'), big('blockInsert'), big('blockEdit'), big('attrEdit', more)],
    row: [sm('tag'), sm('blockAttr'), sm('blockSave'), sm('blockBase'), sm('tagSync'), sm('tagSelect'), sm('blockSwap')],
  },
  {
    title: 'Modify',
    grid: [big('move'), sm('copy'), sm('rotate'), big('trim', more), sm('fillet', more), sm('array', more), sm('mirror'), sm('stretch'), sm('offset'), sm('extrude')],
    row: [sm('taper'), sm('extract'), sm('scale'), sm('breakAt', more), sm('join'), sm('order'), sm('group'), sm('purge')],
  },
  {
    title: 'Text',
    grid: [big('mtext'), big('textStyle'), sm('stext'), sm('spell'), sm('field'), sm('pdfText'), sm('textConv'), sm('find'), sm('fieldSync'), sm('pdfTool')],
  },
  {
    title: 'Dimension',
    grid: [big('dim'), big('dimStyle'), sm('dimLinear', more), sm('centerMark', more), sm('dimSpace'), sm('measure'), sm('dimCont', more), sm('tolerance'), sm('inspect'), sm('oblique', more)],
  },
  {
    title: 'Leader',
    grid: [big('leader'), big('leaderStyle'), sm('leaderAdd'), sm('leaderAlign'), sm('leaderBolt'), null, sm('leaderDel'), sm('leaderCollect')],
  },
  {
    title: 'Table',
    grid: [big('table', { badge: true }), big('tableStyle', { badge: true }), sm('link'), sm('linkDown'), null, null, sm('linkField'), sm('linkSync')],
  },
  {
    title: 'Parametric',
    grid: [big('geo', more), sm('autoCon'), sm('conShow'), big('dimLock', more), sm('dimConv'), sm('dimShow'), sm('conMix'), sm('conHide'), sm('dimMix'), sm('dimHide')],
  },
]

function Tool({ tool }) {
  if (!tool) return <span />
  return (
    <button
      aria-label={tool.icon}
      className={tool.big ? 'relative col-span-2 row-span-2 flex items-center justify-center' : 'relative flex items-center justify-center'}
    >
      <Icon name={tool.icon} big={tool.big} />
      {tool.badge && <Badge className="top-0 right-0" />}
      {tool.more && (
        <svg viewBox="0 0 8 8" className={tool.big ? 'absolute right-0.5 bottom-0.5 size-2' : 'absolute right-0 bottom-0 size-2'} aria-hidden="true">
          <path d="M8 0V8H0Z" fill="#a0a0a0" />
        </svg>
      )}
    </button>
  )
}

function ToolSet({ set, first }) {
  return (
    <section className="mx-2 border-b-2 border-[#252a34] pb-3">
      <div className={first ? 'flex h-10 items-center justify-between' : 'flex h-[42px] items-center justify-between pt-0.5'}>
        <h2>
          <button className="flex items-center gap-[9px] text-[20px] leading-6 text-[#f4f4f4]">
            <Caret className="h-2 w-[17px]" fill="#f4f4f4" />
            {set.title}
          </button>
        </h2>
        <button aria-label={`${set.title} settings`} className="mr-0.5">
          <Gear className="size-[19px]" />
        </button>
      </div>
      <div className="grid auto-rows-[44px] grid-cols-[repeat(8,44px)]">
        {set.grid.map((t, i) => <Tool tool={t} key={i} />)}
      </div>
      {set.row && (
        <div className="grid auto-rows-[44px] grid-cols-[repeat(8,44px)] pt-1">
          {set.row.map((t, i) => <Tool tool={t} key={i} />)}
        </div>
      )}
    </section>
  )
}

function Sidebar() {
  return (
    <aside className="flex w-[368px] shrink-0 flex-col bg-[#3c4350] font-['Liberation_Sans',Arial,sans-serif]">
      <div className="flex h-[46px] shrink-0 text-[24px]">
        <button className="w-40 pr-0.5 text-white">Drafting</button>
        <button className="w-[162px] border-x-2 border-b-2 border-[#252a34] bg-[#2f333e] text-[#a3a5a9]">Modeling</button>
        <button aria-label="Collapse tool sets" className="flex flex-1 items-center justify-center border-b-2 border-[#252a34]">
          <svg viewBox="0 0 14 12" className="h-3 w-3.5" fill="none" stroke="#b0b3b8" strokeWidth="1.5"><path d="M6 1L1 6L6 11M13 1L8 6L13 11" /></svg>
        </button>
      </div>
      <div className="flex-1">
        {toolSets.map((set, i) => <ToolSet set={set} first={i === 0} key={set.title} />)}
      </div>
      <div className="flex h-11 shrink-0 items-center gap-[35px] pl-[31px]">
        <button aria-label="Add tool set"><Plus /></button>
        <button aria-label="Tool set list">
          <svg viewBox="0 0 26 20" className="h-5 w-[26px]" fill={W}><path d="M5 0H26V2H5ZM5 6H26V8H5ZM0 12H18V15H0ZM20 15L23 11L26 15ZM5 18H26V20H5Z" /></svg>
        </button>
      </div>
    </aside>
  )
}

/* ================= TOP BAR ================= */

const topGroups = [
  ['fileNew', 'open*', 'save', 'saveAs'],
  ['undo', 'redo'],
  ['print', 'publish*', 'pageSetup', 'plotStyle'],
  ['importFile', 'exportFile', 'attach', 'saveWeb'],
  ['zoomWin', 'pan', 'orbit'],
  ['props', 'quick', 'geoRef', 'blockConv', 'cleanup', 'count*'],
  ['compare', 'share*', 'activity*'],
]

function TopBar() {
  return (
    <header className="relative flex h-[82px] shrink-0 justify-center gap-[62px] border-b-2 border-[#252a34] bg-[#3b4453] pt-3.5">
      {topGroups.map((group, g) => (
        <div className="flex" key={g}>
          {group.map((item) => {
            const name = item.replace('*', '')
            return (
              <button className="relative flex w-[66px] items-center justify-center" aria-label={name} key={name}>
                <Icon name={name} />
                {item.endsWith('*') && <Badge className="top-[12px] right-[1px]" />}
              </button>
            )
          })}
        </div>
      ))}
      <span className="absolute top-2.5 right-2.5 size-3 rounded-full bg-[#5f5cea]" />
    </header>
  )
}

/* ================= DRAWING AREA ================= */

const hyperbola = 'M352 272L359 287L374 317L390 348L404 372L418 397L434 426L448 448L463 475L480 499L497 520L512 533L526 540H542L554 535L569 524L588 501L603 478L624 442L646 405L658 381L678 342L698 307L712 279L719 272Z'
const parabola = 'M95 672L110 679L123 686L147 701L167 714L193 732L216 752L238 777L247 796L251 810L254 816V840L249 856L233 877L216 893L175 921L141 938L119 947L94 959Z'

function Canvas() {
  return (
    <main className="relative flex-1 overflow-hidden bg-[#8a8a8a]">
      <div className="absolute top-[209px] left-[642px] border-2 border-[#a9a9a9] bg-white shadow-[0_0_0_6px_#808080,0_0_0_12px_#858585]">
        <svg viewBox="2 1 805 1136" className="block h-[1136px] w-[805px]" fill="none" strokeWidth="2">
          <circle cx="172" cy="180" r="80" stroke="#e8483c" />
          <ellipse cx="144" cy="447" rx="110" ry="69" stroke="#74fafd" />
          <path d={parabola} stroke="#74f953" />
          <path d={hyperbola} stroke="#ea4ff5" />
          <path d={hyperbola} stroke="#ea4ff5" transform="translate(0 1313) scale(1 -1)" />
        </svg>
      </div>
      {/* crosshair */}
      <svg viewBox="0 0 146 146" className="absolute top-[511px] left-[1570px] size-[146px]" fill="none" stroke="#1c1c1c" strokeWidth="2">
        <path d="M73 0V67M73 79V146M0 73H67M79 73H146M67 67H79V79H67Z" />
      </svg>
      {/* ucs icon */}
      <svg viewBox="0 0 104 180" className="absolute bottom-[30px] left-8 h-[180px] w-[104px]" fill="none" stroke="#2c4fd2" strokeWidth="2">
        <path d="M1 3V176H100ZM1 161H16V176" />
        <text x="17" y="77" fontSize="37" textAnchor="middle" fontFamily="Lato, Liberation Sans, sans-serif" fontWeight="300" fill="#2c4fd2" stroke="none">Y</text>
        <text x="69" y="173" fontSize="37" textAnchor="middle" fontFamily="Lato, Liberation Sans, sans-serif" fontWeight="300" fill="#2c4fd2" stroke="none">X</text>
      </svg>
      <CommandLine />
    </main>
  )
}

function CommandLine() {
  return (
    <div className="absolute bottom-0 left-1/2 w-[1000px] -translate-x-1/2 font-['Noto_Sans',sans-serif]">
      <div className="ml-20 flex h-[113px] bg-[#3b4453] pt-3">
        <div className="flex flex-1 flex-col justify-end overflow-hidden pl-3 text-[20px] leading-[30px] whitespace-nowrap text-[#b6babf]">
          <p>Enter layout option [Copy/Delete/New/Template/Rename/SAveas/Set/?] &lt;set&gt;: _S</p>
          <p>Enter layout to make current &lt;A3rd&gt;: A4rd</p>
          <p>Regenerating layout.</p>
          <p>Regenerating model - caching viewports.</p>
        </div>
        <span className="mr-2.5 mb-1 h-10 w-2 self-end rounded-full bg-[#9a9da2]" />
      </div>
      <div className="flex h-[50px] items-center bg-[#3b4453]">
        <button aria-label="Recent commands" className="flex w-[91px] items-center gap-1 pl-[18px]">
          <svg viewBox="0 0 28 18" className="h-[18px] w-7" fill="none" stroke="#c5c7ca" strokeWidth="2"><path d="M1 1L10 6L1 11M15 17H28" /></svg>
          <Caret className="h-[7px] w-3" fill="#b6babf" />
        </button>
        <input aria-label="Command" placeholder="Type a command" className="min-w-0 flex-1 bg-transparent pb-0.5 text-[23px] leading-8 text-white italic outline-none placeholder:text-[#9a9ea5]" />
        <Caret className="mr-6 h-2 w-3" fill="#9a9a9a" />
        <button aria-label="Expand command history" className="mr-5">
          <svg viewBox="0 0 26 26" className="size-[26px]" fill="none" stroke={W} strokeWidth="2">
            <path d="M12 9H1V25H25V9H17M6 9V25" />
            <path d="M14 16V4" stroke={B} />
            <path d="M9 6L14 0L19 6Z" fill={B} stroke="none" />
          </svg>
        </button>
      </div>
    </div>
  )
}

function FileTabs() {
  return (
    <nav className="flex h-[46px] shrink-0 border-x-2 border-b-2 border-[#252a34] bg-[#3b4453]">
      <button aria-label="All drawings" className="flex w-12 items-center justify-center border-r-2 border-[#252a34]">
        <svg viewBox="0 0 28 28" className="size-7"><path d="M0 0H13V13H0Z" fill={LB} /><path d="M16 2H27V13H16ZM2 16H13V27H2ZM16 16H27V27H16Z" fill={W} /></svg>
      </button>
      <button aria-label="New drawing" className="flex w-[46px] items-center justify-center border-r-2 border-[#252a34]"><Plus /></button>
      <button className="w-[258px] border-r-2 border-[#252a34] bg-[#4f5a6c] px-1.5 pb-1 text-left text-[23px] leading-9 font-bold text-[#f4f4f4]">conicas*</button>
    </nav>
  )
}

/* ================= RIGHT PANEL ================= */

const layers = [
  { name: '0', color: 'bg-white' },
  { name: 'circulo', color: 'bg-[#f03e23]' },
  { name: 'CONICA', color: 'bg-white' },
  { name: 'Defpoints', color: 'bg-white', locked: true },
  { name: 'elipse', color: 'bg-[#6dfafe]' },
  { name: 'hiperbole', color: 'bg-[#ee55f7]' },
  { name: 'janelas', color: 'bg-[#f39936]', current: true },
  { name: 'parabola', color: 'bg-[#6bf747]' },
]

const styles = [
  ['Text style', 'style1'],
  ['Dimension style', 'Copy of Sta...'],
  ['Detail View st...', 'Metric50'],
  ['Multileader st...', 'Standard'],
  ['Section View...', 'Metric50'],
  ['Table style', 'Standard'],
]

const layerTools = ['layMake', 'layMatch', 'layPrev', 'layCur', 'layCopy', 'layFreeze', 'layOff', 'layLock', 'layUnlock']

const LockIcon = () => <svg viewBox="0 0 14 20" className="mx-auto h-5 w-3.5"><Lock x={0} y={0} hole="#4f5a6c" /></svg>

function PanelTabs() {
  return (
    <div className="flex h-[46px] shrink-0">
      <button aria-label="Layers and properties" className="flex w-[103px] items-center justify-center"><Icon name="layInfo" /></button>
      <button aria-label="Sheet sets" className="relative flex w-[107px] items-center justify-center border-x-2 border-b-2 border-[#252a34] bg-[#2f333e]">
        <Icon name="sheetSet" />
        <Badge className="-top-[3px] right-[26px]" />
      </button>
      <div className="flex-1 border-b-2 border-[#252a34] bg-[#2f333e]" />
      <button aria-label="Collapse panel" className="flex w-[50px] items-center justify-center border-b-2 border-l-2 border-[#252a34]">
        <svg viewBox="0 0 14 12" className="h-3 w-3.5" fill="none" stroke="#b0b3b8" strokeWidth="1.5"><path d="M1 1L6 6L1 11M8 1L13 6L8 11" /></svg>
      </button>
    </div>
  )
}

function LayerTable() {
  return (
    <div className="ml-5 w-[432px] border-2 border-[#343b49]">
      <div className="h-[695px] bg-[#4f5a6c]">
        <table className="w-full table-fixed border-collapse text-left text-[23px] leading-[38px]">
          <thead>
            <tr className="h-[47px] border-b-2 border-[#2c313c] bg-[#2f333e]">
              <th className="w-[62px]" aria-label="Visible">
                <svg viewBox="0 0 24 14" className="mx-auto h-3.5 w-6"><path d="M0 7Q12 -7 24 7Q12 21 0 7Z" fill={W} /><circle cx="12" cy="7" r="4" fill={W} stroke="#2f333e" strokeWidth="2" /></svg>
              </th>
              <th className="relative border-l-2 border-[#2c313c] bg-[#4f5a6c] p-0 font-bold text-[#d5d8dc]">
                <div className="flex items-center pr-3.5 pl-2">
                  <svg viewBox="0 0 16 16" className="mr-4 size-4"><path d="M1 1H15V15H1Z" fill="none" stroke={W} strokeWidth="2" /><path d="M15 1V15H1Z" fill={W} /></svg>
                  Name
                  <svg viewBox="0 0 10 16" className="ml-auto h-4 w-2.5"><path d="M0 6L5 0L10 6ZM0 10L5 16L10 10Z" fill={W} /></svg>
                </div>
                <svg viewBox="0 0 12 10" className="absolute bottom-0 left-1/2 h-2.5 w-3 -translate-x-1/2"><path d="M0 10V8L6 0L12 8V10Z" fill="#4b97ef" /></svg>
              </th>
              <th className="w-[46px] border-x-2 border-[#2c313c]" aria-label="Frozen">
                <svg viewBox="0 0 20 20" className="mx-auto size-5"><Flake x={10} y={10} /></svg>
              </th>
              <th className="w-[35px]" aria-label="Locked"><LockIcon /></th>
            </tr>
          </thead>
          <tbody className="text-white">
            {layers.map((l) => (
              <tr key={l.name} className={l.current ? 'h-[38px] bg-[#909dae] font-medium' : 'h-[38px]'}>
                <td className="pl-7"><span className="block size-4 rounded-full bg-[#dcdcdc]" /></td>
                <td colSpan="2">
                  <span className="flex items-center gap-[18px]">
                    <span className={`size-[18px] border-2 border-black ${l.color}`} />
                    {l.name}
                  </span>
                </td>
                <td>{l.locked && <LockIcon />}</td>
              </tr>
            ))}
          </tbody>
        </table>
      </div>
      <div className="flex h-8 items-center border-t-2 border-[#2c313c] pl-[5px]">
        <span className="h-2 w-[145px] rounded-full bg-[#8b9099]" />
      </div>
    </div>
  )
}

function RightPanel() {
  return (
    <aside className="flex w-[472px] shrink-0 flex-col bg-[#3b4453] text-[23px]">
      <PanelTabs />
      <div className="flex h-[30px] items-center justify-between pr-[17px] pl-[21px]">
        <h2 className="text-[24px] leading-8 text-[#f0f0f0]">Layers</h2>
        <button aria-label="Undock layers"><Icon name="dock" /></button>
      </div>
      <div className="mt-[34px] ml-5 flex">
        {layerTools.map((t) => (
          <button className="flex w-12 justify-center" aria-label={t} key={t}><Icon name={t} /></button>
        ))}
      </div>

      {/* ================= CURRENT LAYER ================= */}
      <div className="mt-[23px] mr-[15px] ml-[19px] flex h-[52px] items-center rounded-sm border-2 border-[#2f3b41] bg-[#4f5a6c] pr-2 pl-[18px]">
        <span className="size-4 rounded-full bg-[#dcdcdc]" />
        <svg viewBox="0 0 52 20" className="ml-[18px] h-5 w-[52px]"><Lock x={1} y={0} c="#6b7586" hole="#4f5a6c" /><Flake x={42} y={10} c="#6b7586" /></svg>
        <span className="ml-[14px] size-[18px] border-2 border-black bg-[#f39936]" />
        <svg viewBox="0 0 24 20" className="ml-3 h-5 w-6 overflow-visible"><path d="M1 1H17V15H1Z" fill="none" stroke={W} strokeWidth="2" /><circle cx="16" cy="13" r="8" fill="#4f5a6c" /><Flake x={16} y={13} r={8} /></svg>
        <select aria-label="Current layer" className="ml-[22px] min-w-0 flex-1 appearance-none bg-transparent font-medium text-white outline-none">
          <option>janelas</option>
        </select>
        <Caret />
      </div>
      <div className="mt-1 mr-[17px] ml-[21px] flex h-[52px] items-center rounded-sm border-2 border-[#2f3b41] bg-[#4f5a6c] pr-2 pl-[11px]">
        <select aria-label="Layer state" className="min-w-0 flex-1 appearance-none bg-transparent font-medium text-white outline-none">
          <option>Unsaved Layer State</option>
        </select>
        <Caret />
      </div>
      <button className="flex h-14 items-center gap-6 pb-1 pl-7 text-[#c3c6ca]">
        <svg viewBox="0 0 16 10" className="h-2.5 w-4" fill="none" stroke="#c3c6ca" strokeWidth="2.4"><path d="M1 1L8 8L15 1" /></svg>
        Hide Layer List
      </button>
      <LayerTable />

      <div className="flex h-[50px] shrink-0 items-center pr-[29px] pl-[34px]">
        <button aria-label="New layer"><Icon name="newLayer" /></button>
        <button className="ml-7" aria-label="New layer state"><Icon name="newState" /></button>
        <button className="ml-7" aria-label="New group"><Icon name="folder" /></button>
        <button className="ml-7" aria-label="New dynamic group"><Icon name="folderBolt" /></button>
        <button className="mr-8 ml-auto h-1 w-4 bg-[#858a94]" aria-label="Delete layer" />
        <button className="flex items-center" aria-label="Columns"><Icon name="columns" /><Caret className="-ml-1 h-[7px] w-3" /></button>
      </div>
      <label className="mr-[22px] ml-[22px] flex h-10 shrink-0 items-center rounded-xl bg-white pl-[9px]">
        <svg viewBox="0 0 36 26" className="h-[26px] w-9" fill="none" stroke="#222" strokeWidth="2"><circle cx="10" cy="11" r="9" /><path d="M17 17L25 25" strokeWidth="3" /><path d="M24 10L29 15L34 10" /></svg>
        <input aria-label="Search for layer" placeholder="Search for layer" className="ml-2 min-w-0 flex-1 bg-transparent text-[26px] text-black outline-none placeholder:text-[#bcbcbc]" />
      </label>

      {/* ================= PROPERTIES ================= */}
      <div className="mt-[18px] flex h-8 items-center border-t-2 border-[#252a34] pr-3.5 pl-[21px]">
        <h2 className="text-[25px] leading-8 text-[#f0f0f0]">Properties</h2>
        <div className="ml-auto flex h-7 rounded-sm border-2 border-[#2c313c] text-[19px] leading-6">
          <button className="w-[60px] bg-[#4f5a6c] font-medium text-white">All</button>
          <button className="w-[56px] border-l-2 border-[#2c313c] text-[#8b919c]">My</button>
        </div>
        <button className="ml-[18px] opacity-40" aria-label="Quick select"><Icon name="quickSel" /></button>
        <button className="ml-4" aria-label="Undock properties"><Icon name="dock" /></button>
      </div>
      <div className="mt-[17px] mr-5 ml-[21px] flex h-[42px] shrink-0 items-center rounded-sm border-2 border-[#384150] bg-[#444d5f] pr-2 pl-[11px]">
        <select aria-label="Selection" disabled className="min-w-0 flex-1 appearance-none bg-transparent text-[#818998] opacity-100 outline-none">
          <option>Paper Space</option>
        </select>
        <Caret fill="#7d8593" />
      </div>
      <button className="mt-2 flex h-[62px] items-center text-[24px] font-bold text-[#d0d2d5]">
        <svg viewBox="0 0 16 16" className="mr-[22px] ml-7 size-4" fill="none" stroke="#22262e" strokeWidth="2.4"><path d="M4 1L12 8L4 15" /></svg>
        General
      </button>
      <button className="flex h-[62px] items-center text-[24px] font-bold text-[#d0d2d5]">
        <svg viewBox="0 0 16 16" className="mr-[22px] ml-7 size-4" fill="none" stroke="#22262e" strokeWidth="2.4"><path d="M1 5L8 12L15 5" /></svg>
        Annotation
      </button>
      <div className="mb-4 min-h-0 flex-1 overflow-hidden pt-1">
        {styles.map(([label, value]) => (
          <label className="mb-2 flex h-[38px] items-center pl-[87px] text-[#d0d2d5]" key={label}>
            <span className="w-[153px] text-right whitespace-nowrap">{label}</span>
            <span className="ml-5 flex h-[38px] w-[186px] items-center rounded-sm border-2 border-[#2f3b41] bg-[#4f5a6c] pr-2 pl-3">
              <select className="min-w-0 flex-1 appearance-none bg-transparent font-medium text-white outline-none">
                <option>{value}</option>
              </select>
              <Caret />
            </span>
          </label>
        ))}
      </div>
    </aside>
  )
}

/* ================= STATUS BAR ================= */

const Arrow = ({ d }) => <svg viewBox="0 0 12 24" className="h-6 w-3"><path d={d} fill="#858a93" /></svg>

function StatusBar() {
  return (
    <footer className="flex h-12 shrink-0 border-y-2 border-l-2 border-[#252a34] bg-[#3b4453] text-[23px] text-[#b4b8be]">
      <button className="w-[122px] border-r-2 border-[#252a34] pr-2 pb-0.5">Model</button>
      <button aria-label="New layout" className="flex w-[41px] items-center justify-center border-r-2 border-[#252a34]"><Plus /></button>
      <button className="w-[121px] border-r-2 border-[#252a34] pb-0.5">A3rd</button>
      <button className="w-[116px] border-r-2 border-[#252a34] bg-[#4f5a6c] pb-0.5 font-bold text-white">A4rd</button>
      <div className="ml-auto flex items-center border-l-2 border-[#252a34] pr-2">
        <span className="w-[188px] pl-[18px] text-[24px] whitespace-nowrap">0.26, 0.20, 0.00</span>
        {['grid', 'ortho', 'polar', 'dyn', 'lwt', 'transp', 'cycle', 'osnap'].map((n) => (
          <button className="flex w-11 justify-center" aria-label={n} key={n}><Icon name={n} /></button>
        ))}
        <button className="mx-0.5 flex size-10 items-center justify-center bg-[#688dbd]" aria-label="Paper space"><Icon name="space" /></button>
        <button className="flex w-11 justify-center" aria-label="Previous viewport"><Arrow d="M12 0V24L0 12Z" /></button>
        <button aria-label="Maximize viewport"><Icon name="zoomVp" /></button>
        <button className="flex w-11 justify-center" aria-label="Next viewport"><Arrow d="M0 0V24L12 12Z" /></button>
        {['annoVis', 'annoAuto', 'workspace'].map((n) => (
          <button className="flex w-11 justify-center" aria-label={n} key={n}><Icon name={n} /></button>
        ))}
        <button className="flex w-11 justify-center" aria-label="Settings"><Gear className="size-[31px]" fill={W} /></button>
      </div>
    </footer>
  )
}

function App() {
  return (
    <div className="flex h-screen w-full flex-col overflow-hidden bg-[#3b4453] font-['Roboto',Arial,sans-serif]">
      <TopBar />
      <div className="flex min-h-0 flex-1">
        <Sidebar />
        <div className="flex min-w-0 flex-1 flex-col">
          <div className="flex min-h-0 flex-1">
            <div className="flex min-w-0 flex-1 flex-col">
              <FileTabs />
              <Canvas />
            </div>
            <RightPanel />
          </div>
          <StatusBar />
        </div>
      </div>
    </div>
  )
}

export default App
